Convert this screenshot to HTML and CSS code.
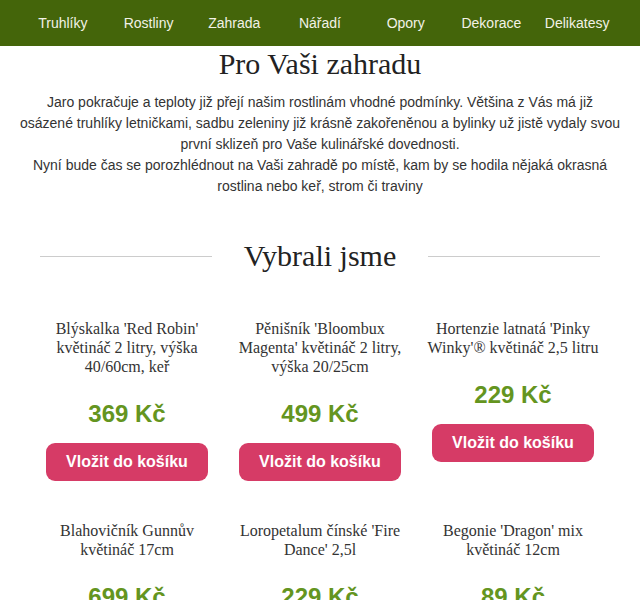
FILE: index.html
```html
<!DOCTYPE html>
<html lang="cs">
<head>
  <meta charset="UTF-8">
  <meta name="viewport" content="width=device-width, initial-scale=1.0">
  <title>Pro Vaši zahradu</title>
  <link rel="stylesheet" href="styles.css">
</head>
<body>
  <nav class="menu">
    <a href="#">Truhlíky</a>
    <a href="#">Rostliny</a>
    <a href="#">Zahrada</a>
    <a href="#">Nářadí</a>
    <a href="#">Opory</a>
    <a href="#">Dekorace</a>
    <a href="#">Delikatesy</a>
  </nav>

  <div class="intro">
    <h1>Pro Vaši zahradu</h1>
    <p>Jaro pokračuje a teploty již přejí našim rostlinám vhodné podmínky. Většina z Vás má již osázené truhlíky letničkami, sadbu zeleniny již krásně zakořeněnou a bylinky už jistě vydaly svou první sklizeň pro Vaše kulinářské dovednosti.<br>Nyní bude čas se porozhlédnout na Vaši zahradě po místě, kam by se hodila nějaká okrasná rostlina nebo keř, strom či traviny</p>
  </div>

  <h2 class="divider"><span>Vybrali jsme</span></h2>

  <div class="products">
    <div class="product">
      <div class="name">Blýskalka 'Red Robin' květináč 2 litry, výška 40/60cm, keř</div>
      <div class="price">369 Kč</div>
      <button class="buy">Vložit do košíku</button>
    </div>
    <div class="product">
      <div class="name">Pěnišník 'Bloombux Magenta' květináč 2 litry, výška 20/25cm</div>
      <div class="price">499 Kč</div>
      <button class="buy">Vložit do košíku</button>
    </div>
    <div class="product">
      <div class="name">Hortenzie latnatá 'Pinky Winky'® květináč 2,5 litru</div>
      <div class="price">229 Kč</div>
      <button class="buy">Vložit do košíku</button>
    </div>
    <div class="product">
      <div class="name">Blahovičník Gunnův květináč 17cm</div>
      <div class="price">699 Kč</div>
      <button class="buy">Vložit do košíku</button>
    </div>
    <div class="product">
      <div class="name">Loropetalum čínské 'Fire Dance' 2,5l</div>
      <div class="price">229 Kč</div>
      <button class="buy">Vložit do košíku</button>
    </div>
    <div class="product">
      <div class="name">Begonie 'Dragon' mix květináč 12cm</div>
      <div class="price">89 Kč</div>
      <button class="buy">Vložit do košíku</button>
    </div>
  </div>
</body>
</html>
```

FILE: styles.css
```css
body {
  margin: 0;
  font-family: "Liberation Sans", Arial, sans-serif;
  color: #333;
  background-color: #fff;
}
.menu {
  background-color: #44650a;
  height: 46px;
  padding: 0 20px;
  display: grid;
  grid-template-columns: repeat(7, 1fr);
  align-items: center;
}
.menu a {
  color: #f2f2e6;
  text-decoration: none;
  font-size: 14px;
  text-align: center;
}
.intro {
  width: 600px;
  margin: 0 auto;
  text-align: center;
}
h1 {
  font-family: "Liberation Serif", "Times New Roman", serif;
  font-weight: normal;
  font-size: 30px;
  line-height: 34px;
  margin: 1px 0 11px;
  color: #222;
}
.intro p {
  font-size: 14px;
  line-height: 21px;
  margin: 0;
}
.divider {
  width: 560px;
  margin: 41px auto 0;
  display: flex;
  align-items: center;
  gap: 32px;
  font-family: "Liberation Serif", "Times New Roman", serif;
  font-weight: normal;
  font-size: 30px;
  line-height: 36px;
  color: #222;
}
.divider::before,
.divider::after {
  content: "";
  flex: 1;
  border-top: 1px solid #ccc;
}
.products {
  width: 579px;
  margin: 45px auto 0;
  display: grid;
  grid-template-columns: repeat(3, 1fr);
  row-gap: 40px;
  align-items: start;
}
.product {
  padding: 0 10px;
  display: flex;
  flex-direction: column;
  align-items: center;
  text-align: center;
}
.name {
  font-family: "Liberation Serif", "Times New Roman", serif;
  font-size: 16px;
  line-height: 19px;
  color: #333;
}
.price {
  color: #64951f;
  font-weight: bold;
  font-size: 24px;
  line-height: 28px;
  margin-top: 24px;
}
.buy {
  margin-top: 15px;
  width: 162px;
  height: 38px;
  border: none;
  border-radius: 9px;
  background-color: #d63b66;
  color: #fff;
  font-family: "Liberation Sans", Arial, sans-serif;
  font-weight: bold;
  font-size: 16px;
  cursor: pointer;
}
```
